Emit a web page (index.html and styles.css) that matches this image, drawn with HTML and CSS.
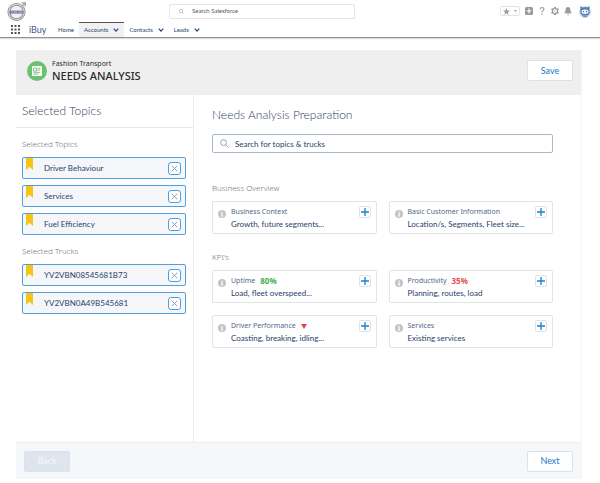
FILE: index.html
```html
<!DOCTYPE html>
<html lang="en">
<head>
<meta charset="utf-8">
<meta name="viewport" content="width=device-width, initial-scale=1">
<title>iBuy - Needs Analysis</title>
<link rel="stylesheet" href="styles.css">
</head>
<body>
<svg class="defs" aria-hidden="true">
  <symbol id="search" viewBox="0 0 10 10"><circle cx="4" cy="4" r="3.2"/><path d="M6.4 6.4 9.4 9.4"/></symbol>
  <symbol id="chevron" viewBox="0 0 6 4"><path d="M.7.7 3 3.1 5.3.7"/></symbol>
  <symbol id="close" viewBox="0 0 7 7"><path d="M.7.7 6.3 6.3M6.3.7.7 6.3"/></symbol>
  <symbol id="plus" viewBox="0 0 8 8"><path d="M4 0V8M0 4H8"/></symbol>
  <symbol id="ribbon" viewBox="0 0 7 12"><path d="M0 0H7V12L3.5 8.8 0 12Z"/></symbol>
  <symbol id="info" viewBox="0 0 8 8"><circle cx="4" cy="4" r="4" fill="#c4c4c4"/><path d="M3.4 1.5H4.7V2.5H3.4ZM3 3.3H4.7V5.7H5.2V6.4H2.9V5.7H3.5V4H3Z" fill="#fff"/></symbol>
</svg>

<header class="topbar">
  <div class="utility">
    <svg class="logo" viewBox="0 0 20 20" role="img" aria-label="Volvo">
      <circle cx="9.5" cy="11" r="7.6" fill="#f1f1f1" stroke="#88888c" stroke-width="2.8"/>
      <circle cx="9.5" cy="11" r="7.6" fill="none" stroke="#d4d4d6" stroke-width="1.3"/>
      <path d="M14.9 5.2 18 2M14.5 1.9H18.3V5.6" fill="none" stroke="#a5a5a9" stroke-width="1.3"/>
      <rect x="2.6" y="9.6" width="13.8" height="3" fill="#6d749c"/>
      <path d="M4 10.3 5 12 6 10.3M7 10.4H8.4V12H7ZM9.5 10.2V12H10.7M11.4 10.3 12.2 12 13 10.3M13.8 10.4H15V12H13.8Z" fill="none" stroke="#ccd0e3" stroke-width=".5"/>
    </svg>
    <label class="global-search">
      <svg class="line-icon"><use href="#search"/></svg>
      <input type="search" placeholder="Search Salesforce" aria-label="Search Salesforce">
    </label>
    <div class="tools">
      <button class="favorites" aria-label="Favorites">
        <svg class="star" viewBox="0 0 10 10"><path d="M5 0 6.3 3.5 10 3.7 7.1 6 8.1 9.6 5 7.6 1.9 9.6 2.9 6 0 3.7 3.7 3.5Z"/></svg>
        <svg class="caret" viewBox="0 0 4 3"><path d="M0 0H4L2 3Z"/></svg>
      </button>
      <button aria-label="Add"><svg viewBox="0 0 10 10"><rect width="10" height="10" rx="2"/><path d="M5 2V8M2 5H8" stroke="#fff" stroke-width="1.5"/></svg></button>
      <button aria-label="Help"><svg viewBox="0 0 10 10"><path d="M2.7 3.1C2.7-.1 7.5 0 7.4 2.9 7.3 4.7 5 4.6 5 7" fill="none" stroke="#999" stroke-width="1.3"/><circle cx="5" cy="9" r=".9"/></svg></button>
      <button aria-label="Setup"><svg viewBox="0 0 10 10"><path d="M4 0H6L6.4 1.4 7.5 2 8.9 1.7 9.8 3.4 8.8 4.4V5.6L9.8 6.6 8.9 8.3 7.5 8 6.4 8.6 6 10H4L3.6 8.6 2.5 8 1.1 8.3.2 6.6 1.2 5.6V4.4L.2 3.4 1.1 1.7 2.5 2 3.6 1.4Z"/><circle cx="5" cy="5" r="2.5" fill="#fff"/><path d="M5.4 3.1 4 5.3H5L4.6 6.9 6.1 4.6H5Z"/></svg></button>
      <button aria-label="Notifications"><svg viewBox="0 0 10 10"><path d="M5 0C7.4 0 8 1.8 8 3.5 8 5.6 8.5 6.2 9.4 7V7.8H.6V7C1.5 6.2 2 5.6 2 3.5 2 1.8 2.6 0 5 0ZM3.7 8.4H6.3C6.2 10.3 3.8 10.3 3.7 8.4Z"/></svg></button>
      <button class="avatar" aria-label="Profile"><svg viewBox="0 0 12 13"><circle cx="6" cy="7" r="5.8" fill="#b9d3ee"/><path d="M1.4 1 4 2.4Q6 1.8 8 2.4L10.6 1 10.5 5.2Q11.2 8 9.5 9.6L8.6 10.6H3.4L2.5 9.6Q.8 8 1.5 5.2Z" fill="#5a7db0"/><ellipse cx="6" cy="6.8" rx="3.5" ry="2.2" fill="#eef5fc"/><circle cx="4.5" cy="6.6" r=".6" fill="#354d78"/><circle cx="7.5" cy="6.6" r=".6" fill="#354d78"/><path d="M4 10.4H8V12.2H4Z" fill="#7898c4"/></svg></button>
    </div>
  </div>
  <nav class="nav">
    <button class="launcher" aria-label="App launcher"><svg viewBox="0 0 9 9"><path d="M0 0H2V2H0ZM3.5 0H5.5V2H3.5ZM7 0H9V2H7ZM0 3.5H2V5.5H0ZM3.5 3.5H5.5V5.5H3.5ZM7 3.5H9V5.5H7ZM0 7H2V9H0ZM3.5 7H5.5V9H3.5ZM7 7H9V9H7Z"/></svg></button>
    <span class="app">iBuy</span>
    <a class="tab" href="#">Home</a>
    <a class="tab active" href="#" aria-current="page">Accounts <svg><use href="#chevron"/></svg></a>
    <a class="tab" href="#">Contacts <svg><use href="#chevron"/></svg></a>
    <a class="tab" href="#">Leads <svg><use href="#chevron"/></svg></a>
  </nav>
</header>

<div class="panel">
  <div class="panel-head">
    <svg class="badge" viewBox="0 0 20 20"><circle cx="10" cy="10" r="10" fill="#6cc072"/><rect x="5" y="5" width="10" height="10" rx="1" fill="#fff"/><path d="M6.5 7H9.5V10H6.5ZM10.5 7.3H13.3M10.5 9H13.3M6.5 11.3H13.3M6.5 13H11.5" fill="none" stroke="#6cc072" stroke-width=".9"/></svg>
    <div class="heading">
      <p>Fashion Transport</p>
      <h1>NEEDS ANALYSIS</h1>
    </div>
    <button class="btn">Save</button>
  </div>

  <div class="body">
    <aside class="side">
      <h2>Selected Topics</h2>
      <section>
        <h3>Selected Topics</h3>
        <ul>
          <li><svg class="ribbon"><use href="#ribbon"/></svg><span>Driver Behaviour</span><button aria-label="Remove Driver Behaviour"><svg><use href="#close"/></svg></button></li>
          <li><svg class="ribbon"><use href="#ribbon"/></svg><span>Services</span><button aria-label="Remove Services"><svg><use href="#close"/></svg></button></li>
          <li><svg class="ribbon"><use href="#ribbon"/></svg><span>Fuel Efficiency</span><button aria-label="Remove Fuel Efficiency"><svg><use href="#close"/></svg></button></li>
        </ul>
      </section>
      <section>
        <h3>Selected Trucks</h3>
        <ul>
          <li><svg class="ribbon"><use href="#ribbon"/></svg><span>YV2VBN08545681B73</span><button aria-label="Remove YV2VBN08545681B73"><svg><use href="#close"/></svg></button></li>
          <li><svg class="ribbon"><use href="#ribbon"/></svg><span>YV2VBN0A49B545681</span><button aria-label="Remove YV2VBN0A49B545681"><svg><use href="#close"/></svg></button></li>
        </ul>
      </section>
    </aside>

    <main class="main">
      <h2>Needs Analysis Preparation</h2>
      <label class="topic-search">
        <svg class="line-icon"><use href="#search"/></svg>
        <input type="search" placeholder="Search for topics &amp; trucks" aria-label="Search for topics and trucks">
      </label>
      <section>
        <h3>Business Overview</h3>
        <div class="cards">
          <article><svg class="info"><use href="#info"/></svg><div class="copy"><h4>Business Context</h4><p>Growth, future segments...</p></div><button aria-label="Add Business Context"><svg><use href="#plus"/></svg></button></article>
          <article><svg class="info"><use href="#info"/></svg><div class="copy"><h4>Basic Customer Information</h4><p>Location/s, Segments, Fleet size...</p></div><button aria-label="Add Basic Customer Information"><svg><use href="#plus"/></svg></button></article>
        </div>
      </section>
      <section>
        <h3>KPI's</h3>
        <div class="cards">
          <article><svg class="info"><use href="#info"/></svg><div class="copy"><h4>Uptime <strong class="good">80%</strong></h4><p>Load, fleet overspeed...</p></div><button aria-label="Add Uptime"><svg><use href="#plus"/></svg></button></article>
          <article><svg class="info"><use href="#info"/></svg><div class="copy"><h4>Productivity <strong class="bad">35%</strong></h4><p>Planning, routes, load</p></div><button aria-label="Add Productivity"><svg><use href="#plus"/></svg></button></article>
          <article><svg class="info"><use href="#info"/></svg><div class="copy"><h4>Driver Performance <svg class="down" viewBox="0 0 6 5"><path d="M0 0H6L3 5Z"/></svg></h4><p>Coasting, breaking, idling...</p></div><button aria-label="Add Driver Performance"><svg><use href="#plus"/></svg></button></article>
          <article><svg class="info"><use href="#info"/></svg><div class="copy"><h4>Services</h4><p>Existing services</p></div><button aria-label="Add Services"><svg><use href="#plus"/></svg></button></article>
        </div>
      </section>
    </main>
  </div>

  <footer class="actions">
    <button class="btn" disabled>Back</button>
    <button class="btn">Next</button>
  </footer>
</div>
</body>
</html>
```

FILE: styles.css
```css
* { box-sizing: border-box; margin: 0; padding: 0; }
body {
  display: flex;
  flex-direction: column;
  min-height: 100vh;
  padding-bottom: 4px;
  background: #fff;
  color: #2a426c;
  font: 8px/12px Lato, sans-serif;
}
button, input { font: inherit; color: inherit; border: 0; background: none; }
button { display: flex; align-items: center; justify-content: center; cursor: pointer; }
input { flex: 1; min-width: 0; outline: 0; }
ul { list-style: none; }
svg { display: block; flex: none; }
.defs { position: absolute; width: 0; height: 0; }
.line-icon { fill: none; stroke: #8798ae; stroke-width: 1; }

.topbar { border-bottom: 1px solid #929292; box-shadow: 0 1px 1px #ddd; }
.utility { display: grid; grid-template-columns: 162px minmax(100px, 186px) 1fr; align-items: center; height: 22px; padding: 0 9px 0 7px; }
.logo { width: 20px; height: 20px; }
.global-search { display: flex; align-items: center; gap: 8px; height: 15px; padding: 0 9px; border: 1px solid #e6e6e6; border-radius: 2px; font-size: 6px; }
.global-search .line-icon { width: 5px; height: 5px; stroke: #888; }
.global-search input::placeholder { color: #555; }
.tools { display: flex; align-items: center; justify-content: flex-end; gap: 5px; fill: #999; }
.tools svg { width: 8px; height: 8px; }
.tools .favorites { gap: 4px; height: 10px; padding: 0 2px; border: 1px solid #e4e4e4; border-radius: 2px; }
.tools .star { width: 7px; height: 7px; }
.tools .caret { width: 3px; height: 2px; }
.tools .avatar { margin-left: 2px; }
.tools .avatar svg { width: 12px; height: 13px; }

.nav { display: flex; height: 15px; padding-left: 11px; font-size: 6px; line-height: 15px; }
.launcher { width: 9px; }
.launcher svg { width: 9px; height: 9px; fill: #555; }
.app { width: 33px; padding-left: 9px; font-size: 9px; color: #425b7c; }
.tab { display: flex; align-items: center; gap: 5px; padding: 0 5px; color: #24436e; text-decoration: none; }
.tab svg { width: 6px; height: 4px; fill: none; stroke: #1f4779; stroke-width: 1.2; }
.tab.active { background: #f1f1f1; box-shadow: inset 0 1px #555; }

.panel { flex: 1; display: flex; flex-direction: column; margin: 12px 18px 0 16px; border-right: 1px solid #f6f6f4; }
.panel-head { display: flex; align-items: center; gap: 5px; height: 45px; padding: 0 8px 4px 11px; background: #efefef; }
.badge { width: 20px; height: 20px; }
.heading { flex: 1; color: #2c2c2c; font-family: "Noto Sans", sans-serif; }
.heading p { font-size: 7px; line-height: 10px; }
.heading h1 { font-size: 11px; line-height: 13px; font-weight: 500; }
.btn { width: 46px; height: 21px; border: 1px solid #dde2e9; border-radius: 2px; background: #fff; color: #1678c2; font-size: 9px; font-weight: 400; }
.btn:disabled { background: #dfe5ee; color: #f6f8fa; cursor: default; }

.body { flex: 1; display: flex; }
h2 { font-size: 12px; line-height: 16px; font-weight: 300; color: #30425e; }
h3 { font: 300 8px/10px "Noto Sans", sans-serif; color: #6f757d; }
.side { width: 178px; border-right: 1px solid #ececee; }
.side h2 { padding: 8px 6px; border-bottom: 1px solid #e8e8ea; }
.side section { padding: 11px 7px 0 6px; }
.side ul { display: grid; gap: 6px; margin-top: 8px; }
.side li { display: flex; align-items: center; height: 22px; padding: 0 4px 0 3px; border: 1px solid #50a0dd; border-radius: 2px; background: #f4f6f9; }
.ribbon { width: 7px; height: 12px; margin-right: 11px; align-self: flex-start; fill: #f4c518; }
.side li span { flex: 1; }
.side li button { width: 13px; height: 13px; border: 1px solid #50a0dd; border-radius: 3px; background: #fff; }
.side li button svg { width: 7px; height: 7px; stroke: #78899f; stroke-width: .8; }

.main { flex: 1; padding: 12px 28px 0 18px; }
.topic-search { display: flex; align-items: center; gap: 6px; height: 19px; margin: 11px 0 30px; padding: 0 7px; border: 1px solid #a9b8c6; border-radius: 2px; }
.topic-search .line-icon { width: 9px; height: 9px; }
.topic-search input::placeholder { color: #263f67; }
.main section { margin-bottom: 18px; }
.cards { display: grid; grid-template-columns: 1fr 1fr; gap: 12px; margin-top: 8px; }
article { display: flex; height: 33px; padding: 4px 5px 0 5px; border: 1px solid #e2e4e8; border-radius: 2px; }
.info { width: 8px; height: 8px; margin: 4px 5px 0 0; }
.copy { flex: 1; min-width: 0; white-space: nowrap; }
h4 { display: flex; align-items: center; gap: 5px; font: 400 7px/12px "Noto Sans", sans-serif; color: #53688a; }
h4 strong { font-size: 8px; }
.good { color: #46ac4b; }
.bad { color: #e34d50; }
.down { width: 6px; height: 5px; fill: #e34444; }
article button { width: 12px; height: 12px; border: 1px solid #dde3ea; border-radius: 2px; }
article button svg { width: 8px; height: 8px; stroke: #1682d2; stroke-width: 1.3; }

.actions { display: flex; align-items: center; justify-content: space-between; height: 37px; padding: 0 8px; border-top: 1px solid #eceff1; background: #f5f8fa; }
```
